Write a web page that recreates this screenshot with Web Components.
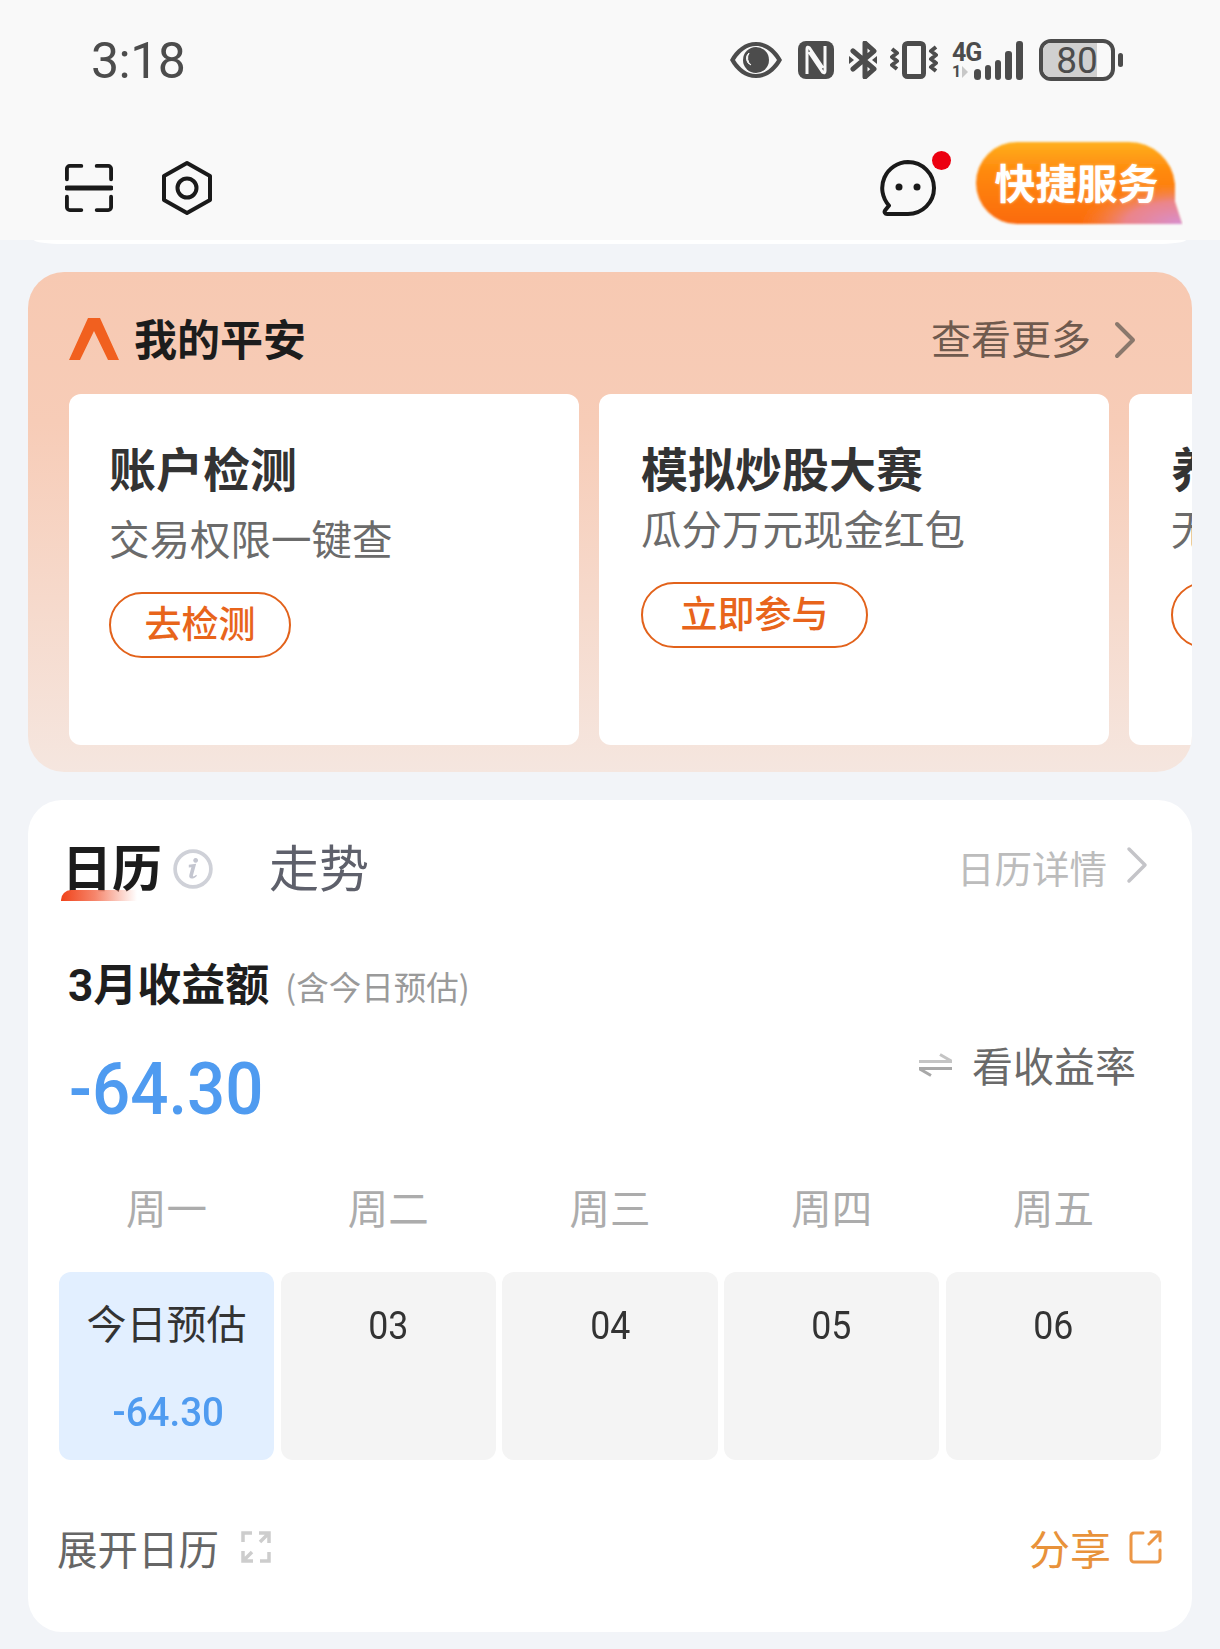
<!DOCTYPE html>
<html lang="zh">
<head>
<meta charset="utf-8">
<title>我的平安</title>
<style>
  html, body { margin: 0; padding: 0; background: #f2f4f8; }
  body {
    width: 1220px;
    height: 1649px;
    overflow: hidden;
    font-family: "Noto Sans CJK SC", "Noto Sans", sans-serif;
  }
</style>
</head>
<body>
<status-bar></status-bar>
<top-nav></top-nav>
<pingan-panel>
  <promo-card title="账户检测" sub="交易权限一键查" action="去检测" variant="low"></promo-card>
  <promo-card title="模拟炒股大赛" sub="瓜分万元现金红包" action="立即参与"></promo-card>
  <promo-card title="养老投资" sub="无忧规划未来" action="去看看"></promo-card>
</pingan-panel>
<calendar-panel></calendar-panel>

<script>
const DIGITS = `"Roboto", "Noto Sans CJK SC", sans-serif`;

class StatusBar extends HTMLElement {
  constructor() {
    super();
    this.attachShadow({ mode: "open" });
  }

  connectedCallback() {
    this.shadowRoot.innerHTML = /* html */`
    <style>
      :host {
        display: flex;
        align-items: center;
        justify-content: space-between;
        height: 120px;
        padding: 0 97px 0 91px;
        background: #f9f9f9;
        color: #4c4c4c;
      }
      .time { margin-top: 2px; font: 400 50px/1 ${DIGITS}; letter-spacing: -0.5px; }
      .icons { display: flex; align-items: center; }
      svg { display: block; fill: #4c4c4c; }
      .net { display: flex; align-items: flex-end; height: 40px; margin-right: 16px; }
      .net-text { width: 28px; font-family: "Roboto", sans-serif; font-weight: 700; white-space: nowrap; }
      .net-4g { font-size: 25px; line-height: 22px; letter-spacing: -1px; }
      .net-1 { display: flex; align-items: center; height: 16px; font-size: 16px; line-height: 16px; }
      .net-1 i { width: 0; height: 0; margin-left: 1px; border-left: 6px solid #c8c8c8; border-top: 6px solid transparent; border-bottom: 6px solid transparent; }
      .batt {
        position: relative;
        display: flex;
        align-items: center;
        justify-content: center;
        box-sizing: border-box;
        width: 76px;
        height: 42px;
        border: 4px solid #4c4c4c;
        border-radius: 12px;
        font: 400 37px/1 ${DIGITS};
        overflow: hidden;
      }
      .batt span { position: relative; }
      .batt i { position: absolute; left: 0; top: 0; bottom: 0; width: 80%; background: #d0d0d0; }
    </style>
    <span class="time">3:18</span>
    <div class="icons">
      <svg width="52" height="36" viewBox="0 0 52 36" style="margin-right:16px">
        <path fill-rule="evenodd" d="M0 18C6 7 15 0 26 0s20 7 26 18c-6 11-15 18-26 18S6 29 0 18zm5 0c5 8 12 14 21 14s16-6 21-14C42 10 35 4 26 4S10 10 5 18z"/>
        <circle cx="26" cy="18" r="13"/>
        <path d="M19 11a7 7 0 0 0 2 12 9 9 0 0 1-2-12z" fill="#f9f9f9" stroke="#f9f9f9"/>
      </svg>
      <svg width="36" height="38" viewBox="0 0 36 38" style="margin-right:15px">
        <rect width="36" height="38" rx="8"/>
        <path d="M9 33V8q0-3 2.500-1L25 27M27 5v25q0 3-2.500 1L11 11" fill="none" stroke="#f9f9f9" stroke-width="3"/>
      </svg>
      <svg width="28" height="38" viewBox="0 0 28 38" style="margin-right:13px">
        <path fill="none" stroke="#4c4c4c" stroke-width="5" stroke-linejoin="round" stroke-linecap="round" d="M4 10l21 18-9 8V2l9 8L4 28"/>
        <path d="M0 15l5 4-5 4zM28 15l-5 4 5 4z"/>
      </svg>
      <svg width="48" height="38" viewBox="0 0 48 38" style="margin-right:14px">
        <rect x="14.500" y="2.500" width="19" height="33" rx="3" fill="none" stroke="#4c4c4c" stroke-width="5"/>
        <path fill="none" stroke="#4c4c4c" stroke-width="4" stroke-linejoin="round" d="M2 8l5 4-5 4 5 4-5 4 5 4M46 6l-5 4 5 4-5 4 5 4-5 4 5 4"/>
      </svg>
      <div class="net">
        <div class="net-text">
          <div class="net-4g">4G</div>
          <div class="net-1">1<i></i></div>
        </div>
        <svg width="50" height="39" viewBox="0 0 50 39" style="margin-left:-7px">
          <rect x="1" y="28" width="7" height="11" rx="3.500"/>
          <rect x="12" y="24" width="6" height="15" rx="3"/>
          <rect x="22" y="19" width="6" height="20" rx="3"/>
          <rect x="32" y="10" width="7" height="29" rx="3"/>
          <rect x="43" y="0" width="7" height="39" rx="3"/>
        </svg>
      </div>
      <div class="batt"><i></i><span>80</span></div>
      <svg width="5" height="14" viewBox="0 0 5 14" style="margin-left:3px"><rect width="5" height="14" rx="2.500"/></svg>
    </div>`;
  }
}

class TopNav extends HTMLElement {
  constructor() {
    super();
    this.attachShadow({ mode: "open" });
  }

  connectedCallback() {
    this.shadowRoot.innerHTML = /* html */`
    <style>
      :host { display: block; margin-bottom: 28px; }
      .bar {
        display: flex;
        align-items: center;
        box-sizing: border-box;
        height: 120px;
        padding: 16px 37px 0 65px;
        background: #f9f9f9;
      }
      .peek {
        height: 4px;
        margin: 0 34px;
        background: #fff;
        border-radius: 0 0 30px 30px / 0 0 4px 4px;
      }
      svg { display: block; fill: none; stroke: #1a1a1a; stroke-width: 4; stroke-linecap: round; stroke-linejoin: round; }
      .spacer { flex: 1; }
      .msg { position: relative; margin-right: 37px; }
      .msg i {
        position: absolute;
        top: -9px;
        right: -15px;
        width: 19px;
        height: 19px;
        border-radius: 50%;
        background: #ec0010;
      }
      .quick {
        position: relative;
        align-self: flex-start;
        display: flex;
        align-items: center;
        justify-content: center;
        width: 210px;
        height: 86px;
        margin-top: 4px;
        padding: 0 3px 4px 0;
        box-sizing: border-box;
        color: #fff;
        font-size: 41px;
        font-weight: 700;
        line-height: 1;
        text-shadow: 0 0 3px rgba(255, 255, 255, .55);
      }
      .quick svg { position: absolute; inset: 0; stroke: none; }
      .quick span { position: relative; }
    </style>
    <div class="bar">
      <svg width="48" height="48" viewBox="0 0 50 50" style="margin-right:48px">
        <path d="M17 2H5a3 3 0 0 0-3 3v11M33 2h12a3 3 0 0 1 3 3v11M17 48H5a3 3 0 0 1-3-3V34M33 48h12a3 3 0 0 0 3-3V34"/>
        <path d="M2 25h46" stroke-width="5"/>
      </svg>
      <svg width="52" height="56" viewBox="0 0 52 56">
        <path d="M26 3l23 13v24L26 53 3 40V16z"/>
        <circle cx="26" cy="28" r="9.500"/>
      </svg>
      <span class="spacer"></span>
      <div class="msg">
        <svg width="56" height="56" viewBox="0 0 56 56">
          <path d="M28 2a26 26 0 0 1 0 52H7c-2 0-3-2-2-3.500l4-5A26 26 0 0 1 28 2z"/>
          <circle cx="19" cy="27" r="3.500" fill="#1a1a1a" stroke="none"/>
          <circle cx="37" cy="27" r="3.500" fill="#1a1a1a" stroke="none"/>
        </svg>
        <i></i>
      </div>
      <div class="quick">
        <svg width="210" height="86" viewBox="0 0 210 86">
          <defs>
            <linearGradient id="q" x1="0" y1="0" x2="0" y2="1">
              <stop offset="0" stop-color="#ffb01e"/>
              <stop offset=".35" stop-color="#ff8a0e"/>
              <stop offset="1" stop-color="#fb6a0c"/>
            </linearGradient>
            <radialGradient id="p" cx="1" cy="1" r=".5">
              <stop offset="0" stop-color="#d78fd0"/>
              <stop offset=".55" stop-color="#e888a0" stop-opacity=".85"/>
              <stop offset="1" stop-color="#f58a50" stop-opacity="0"/>
            </radialGradient>
            <filter id="b" x="-5%" y="-5%" width="110%" height="110%"><feGaussianBlur stdDeviation="1.200"/></filter>
          </defs>
          <g filter="url(#b)">
            <path d="M44 2h112a46 46 0 0 1 46 42v18l7 22H44A41 41 0 0 1 44 2z" fill="url(#q)"/>
            <path d="M44 2h112a46 46 0 0 1 46 42v18l7 22H44A41 41 0 0 1 44 2z" fill="url(#p)"/>
          </g>
        </svg>
        <span>快捷服务</span>
      </div>
    </div>
    <div class="peek"></div>`;
  }
}

class PinganPanel extends HTMLElement {
  constructor() {
    super();
    this.attachShadow({ mode: "open" });
  }

  connectedCallback() {
    this.shadowRoot.innerHTML = /* html */`
    <style>
      :host {
        display: block;
        box-sizing: border-box;
        width: 1164px;
        height: 500px;
        margin: 0 0 28px 28px;
        padding: 0 0 27px 41px;
        border-radius: 36px;
        background: linear-gradient(180deg, #f7c9b2 0%, #f7ccb7 30%, #f5e6df 100%);
        overflow: hidden;
      }
      header {
        display: flex;
        align-items: center;
        box-sizing: border-box;
        height: 122px;
        padding: 8px 56px 0 0;
      }
      h2 { margin: 0; font-size: 43px; font-weight: 700; color: #1c1c1c; line-height: 1; }
      .more { margin-left: auto; font-size: 40px; color: #6f5a4e; line-height: 1; }
      svg { display: block; }
      .row { display: flex; gap: 20px; }
    </style>
    <header>
      <svg width="50" height="42" viewBox="0 0 50 42" style="margin:4px 15px 0 0">
        <path d="M19 0h12l19 42H39L25 13 11 42H0z" fill="#f1601f"/>
      </svg>
      <h2>我的平安</h2>
      <span class="more">查看更多</span>
      <svg width="22" height="38" viewBox="0 0 22 38" style="margin:6px 0 0 23px">
        <path d="M3 3l16 16L3 35" fill="none" stroke="#8a786c" stroke-width="4" stroke-linecap="round" stroke-linejoin="round"/>
      </svg>
    </header>
    <div class="row"><slot></slot></div>`;
  }
}

class PromoCard extends HTMLElement {
  constructor() {
    super();
    this.attachShadow({ mode: "open" });
  }

  connectedCallback() {
    const low = this.getAttribute("variant") === "low";
    this.shadowRoot.innerHTML = /* html */`
    <style>
      :host {
        display: block;
        flex: none;
        box-sizing: border-box;
        width: 510px;
        height: 351px;
        padding: 46px 40px 0 ${low ? 40 : 42}px;
        border-radius: 12px;
        background: #fff;
      }
      .title { font-size: 47px; font-weight: 700; color: #333; line-height: 54px; white-space: nowrap; }
      .sub { margin-top: ${low ? 19 : 9}px; font-size: 40.500px; color: #6b6b6b; line-height: 50px; white-space: nowrap; }
      .btn {
        display: inline-flex;
        align-items: center;
        justify-content: center;
        box-sizing: border-box;
        height: 66px;
        margin-top: 29px;
        padding: 0 ${low ? 33.5 : 37.5}px 6px;
        border: 2px solid #e2621b;
        border-radius: 33px;
        color: #e8641b;
        font-size: 37px;
        font-weight: 500;
        line-height: 1;
        white-space: nowrap;
      }
    </style>
    <div class="title">${this.getAttribute("title")}</div>
    <div class="sub">${this.getAttribute("sub")}</div>
    <span class="btn">${this.getAttribute("action")}</span>`;
  }
}

class DayTile extends HTMLElement {
  constructor() {
    super();
    this.attachShadow({ mode: "open" });
  }

  connectedCallback() {
    const today = this.hasAttribute("today");
    this.shadowRoot.innerHTML = /* html */`
    <style>
      :host {
        display: flex;
        flex-direction: column;
        align-items: center;
        height: 188px;
        padding-top: 30px;
        box-sizing: border-box;
        border-radius: 12px;
        background: ${today ? "#e2efff" : "#f4f4f4"};
        color: #333;
      }
      .label { font: 400 ${today ? 40 : 38}px/48px ${DIGITS}; ${today ? "" : "transform: scaleX(.94);"} }
      .value { margin: 42px 0 0 4px; font: 500 41px/40px ${DIGITS}; color: #4f9bf0; transform: scaleX(.94); }
    </style>
    <div class="label"><slot name="label"></slot></div>
    ${today ? `<div class="value"><slot name="value"></slot></div>` : ""}`;
  }
}

class CalendarPanel extends HTMLElement {
  constructor() {
    super();
    this.attachShadow({ mode: "open" });
  }

  connectedCallback() {
    this.shadowRoot.innerHTML = /* html */`
    <style>
      :host {
        display: block;
        box-sizing: border-box;
        width: 1164px;
        height: 832px;
        margin-left: 28px;
        padding: 34px 31px 0;
        border-radius: 34px;
        background: #fff;
      }
      svg { display: block; }
      .tabs { display: flex; align-items: center; height: 62px; padding: 0 13px 0 3px; }
      .tab-on { position: relative; font-size: 50px; font-weight: 700; color: #1c1c1c; line-height: 62px; }
      .tab-on::after {
        content: "";
        position: absolute;
        left: -1px;
        top: 56px;
        width: 76px;
        height: 11px;
        border-radius: 10px 0 0 0;
        background: linear-gradient(90deg, #f0431a 0%, #f6866c 45%, rgba(255, 255, 255, 0) 100%);
      }
      .tab { font-size: 50px; color: #5e606b; line-height: 62px; margin-left: 56px; }
      .detail { margin: 4px 0 0 auto; font-size: 37.500px; color: #bcbcbc; line-height: 1; }
      .title-row { display: flex; align-items: center; margin: 64px 0 0 9px; }
      h3 { margin: 0; font-size: 44px; font-weight: 700; color: #1e1e1e; line-height: 52px; font-family: "Roboto", "Noto Sans CJK SC", sans-serif; }
      .note { margin-left: 16px; font-size: 32.500px; color: #9a9a9a; line-height: 1; }
      .sum-row { display: flex; align-items: flex-start; margin: 32px 0 0 10px; padding-right: 25px; height: 92px; }
      .sum { font: 500 72px/92px ${DIGITS}; color: #4f9bf0; transform: scaleX(.935); transform-origin: left center; }
      .rate { margin-left: auto; display: flex; align-items: center; font-size: 41px; color: #6a6a6a; line-height: 1; }
      .weeks { display: grid; grid-template-columns: repeat(5, 1fr); gap: 6.500px; margin-top: 43px; text-align: center; font-size: 40.500px; color: #acacac; line-height: 56px; }
      .days { display: grid; grid-template-columns: repeat(5, 1fr); gap: 6.500px; margin-top: 37px; }
      .foot { display: flex; align-items: center; height: 50px; margin-top: 62px; }
      .foot .l { font-size: 40.500px; color: #666; line-height: 1; margin: 2px 0 0 -2px; }
      .foot .r { font-size: 41px; color: #e8923a; line-height: 1; margin-left: auto; }
    </style>
    <div class="tabs">
      <span class="tab-on">日历</span>
      <svg width="40" height="40" viewBox="0 0 38 38" style="margin:8px 0 0 11px">
        <circle cx="19" cy="19" r="17" fill="none" stroke="#cfd1d8" stroke-width="3.500"/>
        <path d="M21.500 8.500a2.300 2.300 0 1 0 .01 0zM15 15l7-1-3 11c-.4 1.500.8 1.500 3-.5l.8.8c-3 3.500-8.300 4-7.300-.5l2-7.500-2.500.3z" fill="#c4c6d0"/>
      </svg>
      <span class="tab">走势</span>
      <span class="detail">日历详情</span>
      <svg width="22" height="38" viewBox="0 0 22 38" style="margin-left:19px">
        <path d="M3 3l16 16L3 35" fill="none" stroke="#c4c4c8" stroke-width="3.500" stroke-linecap="round" stroke-linejoin="round"/>
      </svg>
    </div>
    <div class="title-row">
      <h3>3月收益额</h3>
      <span class="note">(含今日预估)</span>
    </div>
    <div class="sum-row">
      <span class="sum">-64.30</span>
      <span class="rate">
        <svg width="33" height="24" viewBox="0 0 33 24" style="margin-right:20px">
          <path d="M0 8.500h33L21 1.500" fill="none" stroke="#c4c4c4" stroke-width="3"/>
          <path d="M33 15.500H0l12 7" fill="none" stroke="#a8a8a8" stroke-width="3"/>
        </svg>
        看收益率
      </span>
    </div>
    <div class="weeks">
      <span>周一</span><span>周二</span><span>周三</span><span>周四</span><span>周五</span>
    </div>
    <div class="days">
      <day-tile today><span slot="label">今日预估</span><span slot="value">-64.30</span></day-tile>
      <day-tile><span slot="label">03</span></day-tile>
      <day-tile><span slot="label">04</span></day-tile>
      <day-tile><span slot="label">05</span></day-tile>
      <day-tile><span slot="label">06</span></day-tile>
    </div>
    <div class="foot">
      <span class="l">展开日历</span>
      <svg width="32" height="34" viewBox="0 0 32 34" style="margin-left:21px">
        <path d="M12 3H3v9M20 31h9v-9M3 21v10h10M3 31l9-9M19 3h10v10M29 3l-9 9" fill="none" stroke="#cdcdcd" stroke-width="3.500"/>
      </svg>
      <span class="r">分享</span>
      <svg width="33" height="34" viewBox="0 0 33 34" style="margin:0 -1px 0 18px">
        <path d="M14 3H5a3 3 0 0 0-3 3v23a3 3 0 0 0 3 3h23a3 3 0 0 0 3-3v-9M20 14L31 3M22 2h9v9" fill="none" stroke="#ec9645" stroke-width="3" stroke-linecap="round" stroke-linejoin="round"/>
      </svg>
    </div>`;
  }
}

customElements.define("status-bar", StatusBar);
customElements.define("top-nav", TopNav);
customElements.define("pingan-panel", PinganPanel);
customElements.define("promo-card", PromoCard);
customElements.define("day-tile", DayTile);
customElements.define("calendar-panel", CalendarPanel);
</script>
</body>
</html>
